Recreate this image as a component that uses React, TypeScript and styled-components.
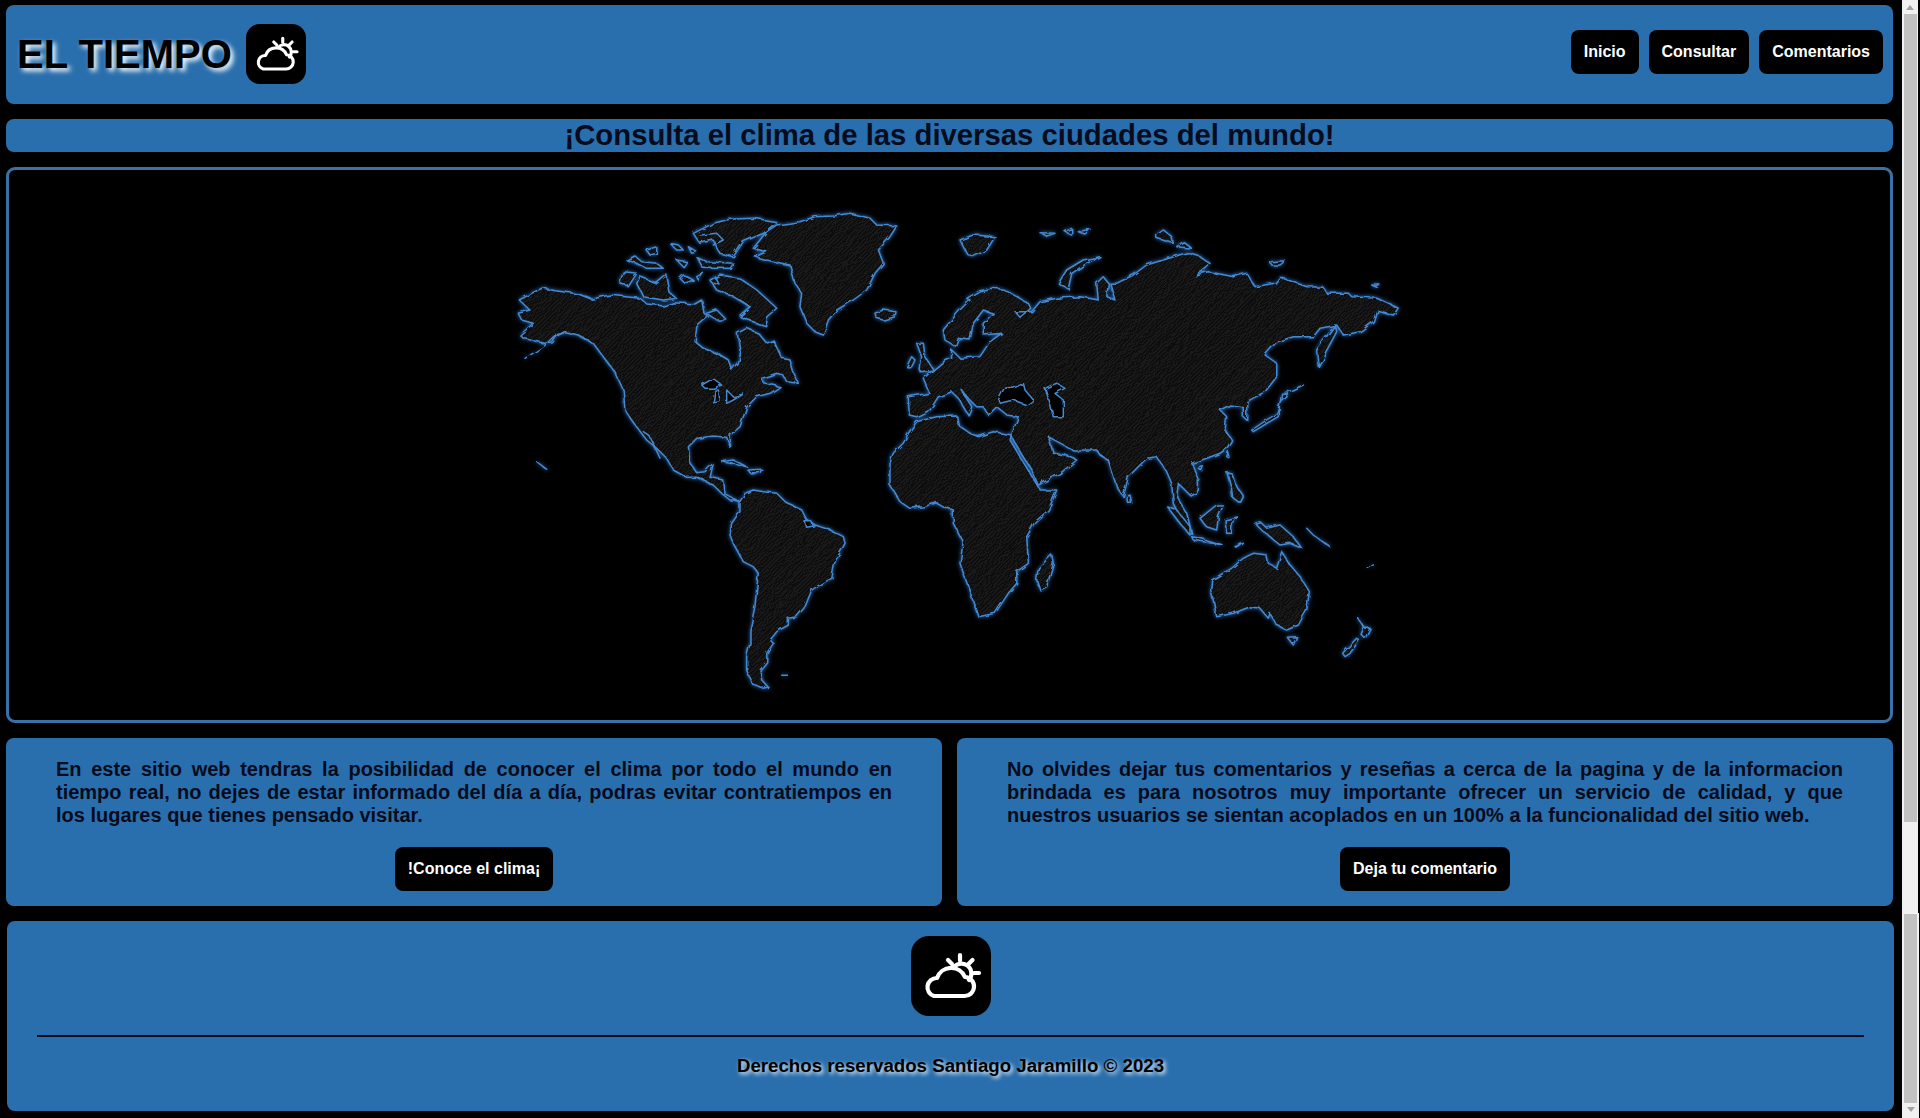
import React from "react";
import styled, { createGlobalStyle } from "styled-components";

const GlobalStyle = createGlobalStyle`
  html, body { margin: 0; padding: 0; background: #000; height: 1118px; overflow: hidden; }
  body { font-family: "Liberation Sans", Arial, sans-serif; }
  * { box-sizing: border-box; }
`;

const BLUE = "#2a6fad";
const INK = "#070b1c";

const Page = styled.div`
  display: flex;
  width: 1920px;
  height: 1118px;
  background: #000;
`;
const Main = styled.main`
  width: 1902px;
  flex: none;
  padding: 5px 9px 0 6px;
  display: flex;
  flex-direction: column;
  gap: 15px;
`;
const Header = styled.header`
  height: 99px;
  background: ${BLUE};
  border-radius: 8px;
  padding: 0 10px 0 11px;
  display: flex;
  align-items: center;
  justify-content: space-between;
`;
const Brand = styled.div`
  display: flex;
  align-items: center;
  gap: 14px;
  margin-bottom: 2px;
`;
const BrandName = styled.h1`
  margin: 2px 0 0;
  font-size: 40px;
  font-weight: 700;
  color: #000;
  text-shadow: 3px 3px 5px #fff;
`;
const IconTile = styled.div<{ $size: number; $radius: number }>`
  width: ${(p) => p.$size}px;
  height: ${(p) => p.$size}px;
  border-radius: ${(p) => p.$radius}px;
  background: #000;
  color: #fff;
  flex: none;
`;
const TileIcon = styled.svg`
  display: block;
  width: 100%;
  height: 100%;
  fill: none;
  stroke: currentColor;
  stroke-width: 4.2;
  stroke-linecap: round;
  stroke-linejoin: round;
`;
const Nav = styled.nav`
  display: flex;
  gap: 10px;
  margin-bottom: 5px;
`;
const PillButton = styled.a`
  height: 44px;
  padding: 0 13px;
  display: inline-flex;
  align-items: center;
  flex: none;
  background: #000;
  color: #fff;
  border-radius: 8px;
  font-size: 16px;
  font-weight: 700;
`;
const Slogan = styled.h2`
  margin: 0;
  height: 33px;
  background: ${BLUE};
  border-radius: 8px;
  color: ${INK};
  font-size: 29.3px;
  font-weight: 700;
  line-height: 31px;
  text-align: center;
`;
const MapFrame = styled.section`
  height: 556px;
  border: 3px solid #3a72a8;
  border-radius: 9px;
  background: #000;
  overflow: hidden;
`;
const MapSvg = styled.svg`
  display: block;
  width: 100%;
  height: 100%;
`;
const Glow = styled.g`
  filter: drop-shadow(0 0 2px #2a6fc0);
`;
const Coast = styled.g`
  stroke: #4589d0;
  stroke-width: 1.5;
  stroke-linejoin: round;
  stroke-linecap: round;
`;
const Land = styled.polygon`
  fill: url(#hatch);
`;
const Sea = styled.polygon`
  fill: #000;
`;
const Trace = styled.polyline`
  fill: none;
`;
const Cards = styled.div`
  display: grid;
  grid-template-columns: 1fr 1fr;
  gap: 15px;
`;
const Card = styled.article`
  height: 168px;
  background: ${BLUE};
  border-radius: 8px;
  padding: 20px 50px 15px;
  display: flex;
  flex-direction: column;
  align-items: center;
  justify-content: space-between;
`;
const CardText = styled.p`
  margin: 0;
  width: 100%;
  font-size: 20px;
  font-weight: 700;
  line-height: 23px;
  text-align: justify;
  color: ${INK};
`;
const Footer = styled.footer`
  height: 190px;
  margin: 0 -1px 0 1px;
  background: ${BLUE};
  border-radius: 8px;
  padding: 15px 30px 0;
  display: flex;
  flex-direction: column;
  align-items: center;
`;
const Rule = styled.hr`
  width: 100%;
  height: 2px;
  margin: 19px 0 0;
  border: 0;
  background: ${INK};
`;
const Copyright = styled.p`
  margin: 18px 0 0;
  font-size: 18.7px;
  font-weight: 700;
  color: #000;
  text-shadow: 2px 2px 4px #fff;
`;
const Rail = styled.aside`
  width: 18px;
  flex: none;
  display: flex;
  flex-direction: column;
`;
const RailTop = styled.div`
  height: 913px;
  width: 16px;
  background: #f1f1f1;
  display: flex;
  flex-direction: column;
  align-items: center;
`;
const RailBottom = styled.div`
  height: 205px;
  width: 17px;
  background: #f1f1f1;
  display: flex;
  flex-direction: column;
  align-items: center;
  padding-top: 1px;
`;
const Thumb = styled.div<{ $h: number }>`
  width: 13px;
  height: ${(p) => p.$h}px;
  background: #c1c1c1;
`;
const ArrowUp = styled.div`
  width: 0;
  height: 0;
  margin: 5px 0 4px;
  border-left: 4px solid transparent;
  border-right: 4px solid transparent;
  border-bottom: 5px solid #a3a3a3;
`;
const ArrowDown = styled.div`
  width: 0;
  height: 0;
  margin-top: 4px;
  border-left: 4px solid transparent;
  border-right: 4px solid transparent;
  border-top: 5px solid #a3a3a3;
`;

const CloudSunIcon = () => (
  <TileIcon viewBox="0 0 80 80" aria-hidden="true">
    <path d="M23 60H53A9.5 9.5 0 0 0 54 41A15 15 0 0 0 26 42A9.2 9.2 0 0 0 23 60Z" />
    <path d="M43 31A9.5 9.5 0 0 1 58 44" />
    <path d="M49 19V24.5M37 24L41 28M61.5 24L57.5 28M63 37H68" />
  </TileIcon>
);

type Frame = [number, number];
const A: Frame = [500, 200];
const B: Frame = [960, 200];
const C: Frame = [500, 440];
const D: Frame = [960, 440];
const E: Frame = [880, 300];

const seg = (f: Frame, s: string) =>
  s
    .trim()
    .split(/\s+/)
    .map((p) => {
      const [x, y] = p.split(",").map(Number);
      return `${(f[0] + x / 3).toFixed(1)},${(f[1] + y / 3).toFixed(1)}`;
    })
    .join(" ");

const LAND: string[] = [
  // North America
  seg(A, "58,300 95,280 128,264 165,272 235,282 275,298 330,285 375,290 420,295 440,312 490,318 520,308 585,312 605,300 612,340 625,350 590,380 585,425 610,445 660,465 685,480 695,510 712,490 720,450 712,400 740,385 775,400 800,430 820,420 845,475 870,480 880,515 895,550 860,545 850,525 830,520 785,535 790,548 840,560 810,580 770,590 740,620 720,680 690,705 692,745 680,712 640,708 590,715 565,740") +
    " " +
    seg(C, "570,70 590,98 615,95 640,70 630,112 668,120 672,160 700,175 720,185 700,180 690,180 665,160 640,135 590,112 560,112 520,90 500,55 470,25 440,0") +
    " " +
    seg(A, "410,680 375,630 370,570 345,515 310,470 280,430 235,405 195,395 170,400 155,425 135,430 100,422 70,415 60,405 100,370 65,360 55,340 90,330"),
  // Greenland
  seg(A, "760,145 800,95 830,75 900,65 945,50 1000,48 1050,40 1110,55 1130,75 1190,78 1170,110 1135,150 1150,190 1125,220 1100,270 1060,300 1010,330 985,360 970,405 945,395 920,370 900,320 905,280 885,250 870,195 800,180 765,170 800,155"),
  seg(A, "1125,340 1150,330 1188,335 1185,350 1150,360 1130,355"),
  // Arctic Canada
  seg(A, "580,100 640,70 690,58 760,55 830,65 790,100 730,125 700,170 660,160 640,120 600,130"),
  seg(A, "630,240 660,225 720,235 770,270 830,325 800,350 800,380 760,365 720,350 750,320 700,290 650,270"),
  seg(A, "410,250 420,230 445,240 470,250 500,225 510,280 530,295 490,300 430,290"),
  seg(A, "360,250 370,215 410,220 385,260"),
  seg(A, "380,180 405,168 425,185 470,190 490,205 440,205 410,190"),
  seg(A, "440,150 470,140 470,160 450,165"),
  seg(A, "510,130 535,135 550,150 530,150"),
  seg(A, "565,140 590,155 575,160"),
  seg(A, "590,170 620,185 700,190 690,205 610,205"),
  seg(A, "530,180 560,185 550,200"),
  seg(A, "550,225 580,240 555,250 540,235"),
  seg(A, "590,230 610,220 595,240"),
  seg(A, "620,340 650,330 680,360 650,360"),
  seg(A, "665,785 700,780 740,800 725,797 690,790"),
  seg(A, "745,810 785,808 780,818 750,818"),
  // South America
  seg(C, "720,185 735,160 760,150 790,155 830,160 860,190 905,210 920,240 945,255 990,270 1030,290 1035,310 1005,365 995,415 965,430 935,450 915,500 890,530 865,535 865,555 830,575 810,600 820,610 800,640 800,665 780,690 785,720 805,742 785,745 755,730 740,690 740,650 750,610 750,570 765,500 775,400 760,380 730,365 700,310 690,285 695,250 720,215"),
  // Eurasia
  seg(B, "20,295 60,272 95,265 130,268 170,290 205,310 212,325 180,352 165,335 215,335 240,305 290,295 360,290 415,300 410,250 430,230 445,250 440,290 465,300 450,250 470,250 520,225 560,195 610,180 680,158 720,170 750,190 705,225 745,215 820,230 860,220 885,260 945,250 960,232 1040,260 1090,262 1100,280 1165,280 1175,290 1250,295 1315,325 1300,345 1250,330 1240,365 1200,395 1150,405 1130,375 1080,385 1060,410 1000,410 950,425 915,465 950,490 950,530 915,575 860,605 860,660 850,650 850,620 810,615 780,630 800,650 795,690 815,720") +
    " " +
    seg(D, "800,25 780,40 740,55 695,70 715,120 715,150 690,165 655,130 650,170 680,220 695,280 670,250 640,190 635,130 620,95 590,50 560,55 530,85 505,110 490,170 470,140 445,60 420,45 410,30 340,30") +
    " " +
    seg(E, "560,440 505,410 520,460 555,465 590,480 540,520 475,555 455,510 400,420 395,405 415,350 380,345 350,320 325,345 310,320 290,320 270,300 240,265 275,320 265,345 235,295 215,275 175,290 150,330 110,350 88,345 85,290 150,280 130,235 190,185 215,175 215,150 240,175 300,170 330,125 365,100 310,105 310,70 340,40 310,30 280,70 270,120 235,115 225,140 195,120 190,90 240,30 270,0"),
  // Africa
  seg(E, "110,365 85,400 70,430 40,460 30,490 30,555 60,605 90,625 130,620 170,608 190,620 220,630 220,670 250,725 240,790 265,860 295,950 345,940 385,880 410,850 410,815 445,790 440,710 465,665 505,630 530,570 480,570 450,520 390,420 395,405 340,395 295,410 270,400 235,375 230,348 170,350"),
  seg(E, "475,805 515,765 520,790 500,860 480,870 470,840"),
  seg(E, "110,130 130,130 135,170 160,210 120,215 125,170"),
  seg(E, "80,200 95,170 105,180 95,200"),
  // Northern islands
  seg(B, "0,120 40,105 105,110 80,150 40,170 20,160"),
  seg(B, "240,98 285,100 260,108"),
  seg(B, "315,95 335,85 335,105"),
  seg(B, "355,95 390,88 375,102"),
  seg(B, "295,250 320,210 370,180 420,170 380,190 335,220 325,265"),
  seg(B, "590,105 610,90 635,110 640,130 590,115"),
  seg(B, "650,140 670,125 695,145"),
  seg(B, "930,185 975,182 960,195 935,195"),
  seg(B, "1235,255 1260,255 1250,262"),
  seg(B, "1075,500 1070,450 1125,375 1130,395 1095,460"),
  seg(B, "875,690 920,660 950,640 960,610 965,580 985,580 960,605 955,650 920,670 880,695"),
  seg(B, "805,755 810,775 800,770"),
  // South-East Asia and Oceania
  seg(D, "715,85 730,80 725,92"),
  seg(D, "800,95 815,100 825,130 850,170 840,190 815,170 810,130"),
  seg(D, "720,235 770,195 790,195 775,230 770,270 740,260"),
  seg(D, "795,240 835,230 815,250 815,280 800,280"),
  seg(D, "620,198 650,210 690,260 690,285 660,250"),
  seg(D, "695,290 720,295 790,315 730,305 700,300"),
  seg(D, "825,320 850,310 835,322"),
  seg(D, "885,250 900,245 920,265 960,255 1000,290 1025,325 990,310 960,315 930,290 905,270"),
  seg(D, "500,170 510,165 515,190 503,190"),
  seg(D, "755,420 815,385 850,355 880,340 920,345 925,370 950,385 965,335 990,375 1020,410 1048,455 1040,510 1015,555 980,570 950,555 930,520 925,535 900,505 870,500 820,520 770,530 760,480 752,450"),
  seg(D, "982,592 1010,590 1000,615"),
  seg(D, "1148,640 1190,595 1198,600 1170,640 1155,650"),
  seg(D, "1195,535 1215,565 1230,565 1215,595 1200,580 1210,560"),
];

const WATER: string[] = [
  seg(A, "605,555 640,535 665,555 640,565 615,565"),
  seg(A, "645,570 655,570 660,605 640,608"),
  seg(A, "680,570 700,590 730,582 700,600 680,610"),
  seg(E, "355,300 375,260 400,265 430,250 435,270 460,300 440,315 400,300 360,310"),
  seg(E, "495,265 530,250 555,265 525,280 550,300 550,350 520,350 510,310"),
  seg(C, "915,245 935,245 940,258 920,262"),
];

const TRACES: string[] = [
  seg(A, "430,695 450,710 480,775"),
  seg(A, "75,475 130,440 160,410 185,395"),
  seg(A, "110,785 140,808"),
  seg(A, "600,105 650,100 670,120 640,135"),
  seg(A, "640,225 660,255 640,250"),
  seg(A, "720,300 750,320 720,345"),
  seg(B, "985,575 1030,555"),
  seg(C, "845,706 865,706"),
  seg(D, "1040,265 1060,285 1110,320"),
  seg(D, "1225,385 1240,375"),
];

const WorldMap = () => (
  <MapSvg viewBox="9 170 1881 550" preserveAspectRatio="none" role="img" aria-label="Mapa del mundo">
    <defs>
      <pattern id="hatch" width="3" height="3" patternUnits="userSpaceOnUse" patternTransform="rotate(45)">
        <rect width="3" height="3" fill="#0f0f0f" />
        <rect width="1" height="3" fill="#1f1f1f" />
      </pattern>
      <filter id="rough" x="-5%" y="-5%" width="110%" height="110%">
        <feTurbulence type="fractalNoise" baseFrequency="0.11" numOctaves="2" seed="4" result="noise" />
        <feDisplacementMap in="SourceGraphic" in2="noise" scale="5" />
      </filter>
    </defs>
    <Glow>
      <Coast filter="url(#rough)">
        {LAND.map((p, i) => (
          <Land key={i} points={p} />
        ))}
        {WATER.map((p, i) => (
          <Sea key={i} points={p} />
        ))}
        {TRACES.map((p, i) => (
          <Trace key={i} points={p} />
        ))}
      </Coast>
    </Glow>
  </MapSvg>
);

export default function App() {
  return (
    <Page>
      <GlobalStyle />
      <Main>
        <Header>
          <Brand>
            <BrandName>EL TIEMPO</BrandName>
            <IconTile $size={60} $radius={14}>
              <CloudSunIcon />
            </IconTile>
          </Brand>
          <Nav>
            <PillButton>Inicio</PillButton>
            <PillButton>Consultar</PillButton>
            <PillButton>Comentarios</PillButton>
          </Nav>
        </Header>
        <Slogan>¡Consulta el clima de las diversas ciudades del mundo!</Slogan>
        <MapFrame>
          <WorldMap />
        </MapFrame>
        <Cards>
          <Card>
            <CardText>
              En este sitio web tendras la posibilidad de conocer el clima por todo el mundo en tiempo real, no dejes de
              estar informado del día a día, podras evitar contratiempos en los lugares que tienes pensado visitar.
            </CardText>
            <PillButton>!Conoce el clima¡</PillButton>
          </Card>
          <Card>
            <CardText>
              No olvides dejar tus comentarios y reseñas a cerca de la pagina y de la informacion brindada es para
              nosotros muy importante ofrecer un servicio de calidad, y que nuestros usuarios se sientan acoplados en un
              100% a la funcionalidad del sitio web.
            </CardText>
            <PillButton>Deja tu comentario</PillButton>
          </Card>
        </Cards>
        <Footer>
          <IconTile $size={80} $radius={18}>
            <CloudSunIcon />
          </IconTile>
          <Rule />
          <Copyright>Derechos reservados Santiago Jaramillo © 2023</Copyright>
        </Footer>
      </Main>
      <Rail>
        <RailTop>
          <ArrowUp />
          <Thumb $h={808} />
        </RailTop>
        <RailBottom>
          <Thumb $h={189} />
          <ArrowDown />
        </RailBottom>
      </Rail>
    </Page>
  );
}
